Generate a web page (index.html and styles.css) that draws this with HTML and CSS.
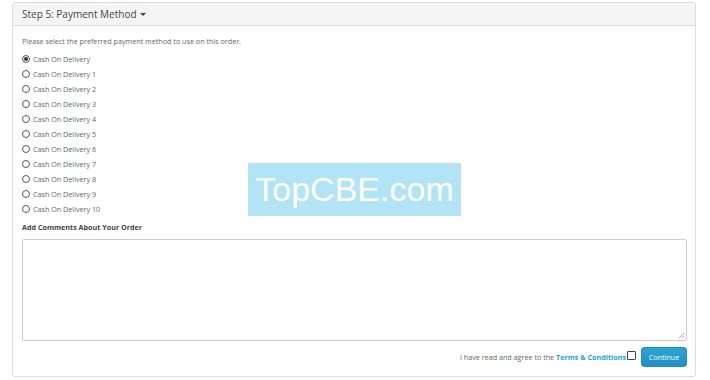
FILE: index.html
```html
<!DOCTYPE html>
<html>
<head>
<meta charset="utf-8">
<link rel="stylesheet" href="styles.css">
</head>
<body>
<div class="panel">
  <div class="panel-heading">Step 5: Payment Method <span class="caret"></span></div>
  <div class="panel-body">
    <p class="intro">Please select the preferred payment method to use on this order.</p>
    <div class="methods">
      <label class="radio"><span class="dot checked"></span>Cash On Delivery</label>
      <label class="radio"><span class="dot"></span>Cash On Delivery 1</label>
      <label class="radio"><span class="dot"></span>Cash On Delivery 2</label>
      <label class="radio"><span class="dot"></span>Cash On Delivery 3</label>
      <label class="radio"><span class="dot"></span>Cash On Delivery 4</label>
      <label class="radio"><span class="dot"></span>Cash On Delivery 5</label>
      <label class="radio"><span class="dot"></span>Cash On Delivery 6</label>
      <label class="radio"><span class="dot"></span>Cash On Delivery 7</label>
      <label class="radio"><span class="dot"></span>Cash On Delivery 8</label>
      <label class="radio"><span class="dot"></span>Cash On Delivery 9</label>
      <label class="radio"><span class="dot"></span>Cash On Delivery 10</label>
    </div>
    <div class="comment-label">Add Comments About Your Order</div>
    <div class="textarea"><span class="grip"></span></div>
    <div class="buttons">
      <span class="agree">I have read and agree to the <a class="terms">Terms &amp; Conditions</a></span>
      <span class="checkbox"></span>
      <span class="btn">Continue</span>
    </div>
  </div>
</div>
<div class="watermark">TopCBE.com</div>
</body>
</html>
```

FILE: styles.css
```css
html, body {
  margin: 0;
  padding: 0;
  background: #fff;
}
body {
  font-family: "Open Sans", "DejaVu Sans", sans-serif;
  color: #666;
  width: 710px;
  height: 380px;
  position: relative;
  overflow: hidden;
}
.panel {
  margin: 2px 0 0 12px;
  width: 684px;
  height: 375px;
  border: 1px solid #ddd;
  border-radius: 3px;
  box-sizing: border-box;
  display: flex;
  flex-direction: column;
}
.panel-heading {
  height: 23px;
  background: #f5f5f5;
  border-bottom: 1px solid #ddd;
  box-sizing: border-box;
  padding-left: 9px;
  font-size: 10px;
  line-height: 22px;
  color: #444;
  border-radius: 3px 3px 0 0;
  display: flex;
  align-items: center;
  gap: 3px;
}
.caret {
  width: 0;
  height: 0;
  border-left: 3px solid transparent;
  border-right: 3px solid transparent;
  border-top: 3px solid #444;
  margin-top: 1px;
}
.panel-body {
  padding: 8px 8px 0 9px;
  display: flex;
  flex-direction: column;
}
.intro {
  margin: 0 0 2px 0;
  font-size: 7.2px;
  line-height: 15px;
}
.methods {
  display: flex;
  flex-direction: column;
}
.radio {
  display: flex;
  align-items: center;
  height: 15px;
  font-size: 7.2px;
  gap: 3px;
}
.dot {
  width: 6px;
  height: 6px;
  border: 1px solid #555;
  border-radius: 50%;
  display: inline-flex;
  align-items: center;
  justify-content: center;
  background: #fff;
}
.dot.checked::after {
  content: "";
  width: 4px;
  height: 4px;
  border-radius: 50%;
  background: #333;
}
.comment-label {
  margin-top: 4px;
  font-size: 7.2px;
  line-height: 15px;
  font-weight: bold;
  color: #444;
}
.textarea {
  margin-top: 4px;
  height: 102px;
  border: 1px solid #ccc;
  border-radius: 2px;
  box-sizing: border-box;
  display: flex;
  justify-content: flex-end;
  align-items: flex-end;
}
.grip {
  width: 5px;
  height: 5px;
  margin: 0 2px 2px 0;
  background: linear-gradient(135deg, transparent 45%, #aaa 45%, #aaa 55%, transparent 55%, transparent 75%, #aaa 75%, #aaa 85%, transparent 85%);
}
.buttons {
  margin-top: 6px;
  display: flex;
  justify-content: flex-end;
  align-items: center;
  height: 20px;
}
.agree {
  font-size: 7.2px;
  color: #666;
}
.terms {
  color: #23a1d1;
  font-weight: bold;
}
.checkbox {
  width: 7px;
  height: 7px;
  border: 1px solid #444;
  border-radius: 1px;
  margin: -3px 5px 0 1px;
}
.btn {
  width: 46px;
  height: 20px;
  box-sizing: border-box;
  background: linear-gradient(#2aa6d6, #1f8fc0);
  border: 1px solid #1f90bf;
  border-radius: 3px;
  color: #fff;
  font-size: 7.2px;
  display: flex;
  align-items: center;
  justify-content: center;
}
.watermark {
  position: absolute;
  left: 248px;
  top: 163px;
  width: 213px;
  height: 53px;
  background: #b3e4f6;
  color: #fff;
  font-family: "Liberation Sans", Arial, sans-serif;
  font-size: 34px;
  display: flex;
  align-items: center;
  justify-content: center;
}
```
